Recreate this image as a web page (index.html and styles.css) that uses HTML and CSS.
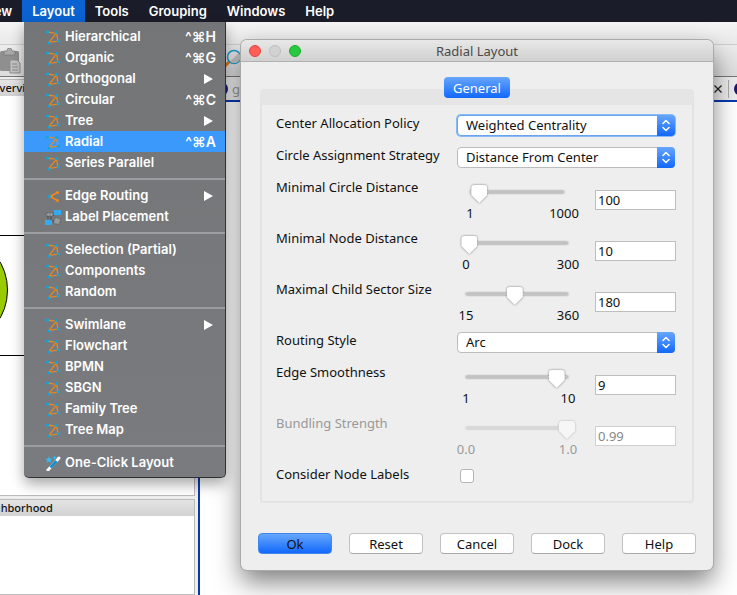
FILE: index.html
```
<!DOCTYPE html>
<html lang="en">
<head>
<meta charset="utf-8">
<title>Radial Layout</title>
<link rel="stylesheet" href="styles.css">
</head>
<body>
<svg class="symbols" aria-hidden="true">
  <symbol id="graph" viewBox="0 0 16 16">
    <path d="M3 3.500L11.500 4L4 13.500L13 12L11.500 4M8 3.800L3.500 3.200" fill="none" stroke="#ee8a1d" stroke-width="1.200"/>
    <g fill="#12a4dc"><circle cx="2.500" cy="3" r="1.600"/><circle cx="11.500" cy="3.500" r="1.600"/><circle cx="4" cy="14" r="1.600"/><circle cx="13.500" cy="12" r="1.600"/></g>
  </symbol>
  <symbol id="updown" viewBox="0 0 18 21">
    <path d="M6 8.500L9 5.500L12 8.500M6 12.500L9 15.500L12 12.500" fill="none" stroke="#fff" stroke-width="1.500" stroke-linecap="round" stroke-linejoin="round"/>
  </symbol>
  <symbol id="submenu" viewBox="0 0 9 10"><path d="M0 0L9 5L0 10Z" fill="#fff"/></symbol>
</svg>

<nav class="menubar">
  <button class="view">View</button>
  <button class="open">Layout</button>
  <button>Tools</button>
  <button>Grouping</button>
  <button>Windows</button>
  <button>Help</button>
</nav>

<main class="app">
  <div class="app-title"></div>
  <div class="toolbar">
    <svg class="paste" viewBox="0 0 22 26" aria-hidden="true">
      <rect x="0" y="3" width="19" height="20" rx="1.500" fill="#8f8f8f"/>
      <path d="M4 7V3H7Q7 0 9.500 0T12 3H15V7Z" fill="#a9a9a9" stroke="#777" stroke-width=".7"/>
      <path d="M10 12H17L20 15V25H10Z" fill="#c4c4c4" stroke="#8b8b8b"/>
      <path d="M12 16H17M12 19H18M12 22H18" stroke="#858585"/>
    </svg>
    <svg class="search" viewBox="0 0 20 20" aria-hidden="true">
      <path d="M6 13L1 18" stroke="#e57a14" stroke-width="3"/>
      <circle cx="10" cy="9" r="6.500" fill="#e8e8e8" stroke="#1b9fd3" stroke-width="1.500"/>
      <path d="M14.500 5A6 6 0 0 1 6 13.500Z" fill="#c4c4c4"/>
    </svg>
  </div>
  <div class="workspace">
    <aside class="side">
      <section class="panel overview">
        <h2>Overview</h2>
        <svg class="preview" viewBox="0 0 194 400" preserveAspectRatio="xMinYMin slice" aria-hidden="true">
          <path d="M0 139.500H194M0 259.500H194" stroke="#000"/>
          <ellipse cx="-32" cy="194" rx="39.500" ry="48" fill="#99cc00" stroke="#000"/>
        </svg>
      </section>
      <section class="panel neighborhood">
        <h2>Neighborhood</h2>
      </section>
    </aside>
    <section class="documents">
      <div class="tabs">
        <span class="dot"></span><span class="tab-name">gl</span>
        <svg class="close" viewBox="0 0 8 8" aria-hidden="true"><path d="M0.500 .5L7.500 7.500M7.500 .5L.5 7.500" stroke="#222" stroke-width="1.300"/></svg>
        <span class="divider"></span><span class="dot"></span>
      </div>
      <div class="canvas"></div>
    </section>
  </div>
</main>

<section class="dialog" role="dialog" aria-labelledby="dialog-title">
  <header class="titlebar">
    <span class="light red"></span><span class="light idle"></span><span class="light green"></span>
    <h1 id="dialog-title">Radial Layout</h1>
  </header>
  <form class="settings">
    <button type="button" class="tab">General</button>
    <div class="frame">
      <div class="row">
        <label for="policy">Center Allocation Policy</label>
        <div class="choice focused"><select id="policy"><option>Weighted Centrality</option></select><svg><use href="#updown"/></svg></div>
      </div>
      <div class="row">
        <label for="strategy">Circle Assignment Strategy</label>
        <div class="choice"><select id="strategy"><option>Distance From Center</option></select><svg><use href="#updown"/></svg></div>
      </div>
      <div class="row tall">
        <label for="circle">Minimal Circle Distance</label>
        <div class="amount">
          <div class="slider inset"><input type="range" id="circle" min="1" max="1000" value="100"><div class="ends"><span>1</span><span>1000</span></div></div>
          <input type="text" value="100" aria-label="Minimal Circle Distance value">
        </div>
      </div>
      <div class="row tall">
        <label for="node">Minimal Node Distance</label>
        <div class="amount">
          <div class="slider"><input type="range" id="node" min="0" max="300" value="10"><div class="ends"><span>0</span><span>300</span></div></div>
          <input type="text" value="10" aria-label="Minimal Node Distance value">
        </div>
      </div>
      <div class="row tall">
        <label for="sector">Maximal Child Sector Size</label>
        <div class="amount">
          <div class="slider"><input type="range" id="sector" min="15" max="360" value="180"><div class="ends"><span>15</span><span>360</span></div></div>
          <input type="text" value="180" aria-label="Maximal Child Sector Size value">
        </div>
      </div>
      <div class="row">
        <label for="routing">Routing Style</label>
        <div class="choice"><select id="routing"><option>Arc</option></select><svg><use href="#updown"/></svg></div>
      </div>
      <div class="row tall">
        <label for="smooth">Edge Smoothness</label>
        <div class="amount">
          <div class="slider"><input type="range" id="smooth" min="1" max="10" value="9"><div class="ends"><span>1</span><span>10</span></div></div>
          <input type="text" value="9" aria-label="Edge Smoothness value">
        </div>
      </div>
      <div class="row tall disabled">
        <label for="bundling">Bundling Strength</label>
        <div class="amount">
          <div class="slider"><input type="range" id="bundling" min="0" max="1" step="0.01" value="0.99" disabled><div class="ends"><span>0.0</span><span>1.0</span></div></div>
          <input type="text" value="0.99" disabled aria-label="Bundling Strength value">
        </div>
      </div>
      <div class="row">
        <label for="consider">Consider Node Labels</label>
        <div class="check"><input type="checkbox" id="consider"></div>
      </div>
    </div>
    <footer class="actions">
      <button type="button" class="primary">Ok</button>
      <button type="button">Reset</button>
      <button type="button">Cancel</button>
      <button type="button">Dock</button>
      <button type="button">Help</button>
    </footer>
  </form>
</section>

<div class="menu" role="menu">
  <button role="menuitem"><svg><use href="#graph"/></svg><span>Hierarchical</span><kbd>^⌘H</kbd></button>
  <button role="menuitem"><svg><use href="#graph"/></svg><span>Organic</span><kbd>^⌘G</kbd></button>
  <button role="menuitem"><svg><use href="#graph"/></svg><span>Orthogonal</span><svg class="more"><use href="#submenu"/></svg></button>
  <button role="menuitem"><svg><use href="#graph"/></svg><span>Circular</span><kbd>^⌘C</kbd></button>
  <button role="menuitem"><svg><use href="#graph"/></svg><span>Tree</span><svg class="more"><use href="#submenu"/></svg></button>
  <button role="menuitem" class="current"><svg><use href="#graph"/></svg><span>Radial</span><kbd>^⌘A</kbd></button>
  <button role="menuitem"><svg><use href="#graph"/></svg><span>Series Parallel</span></button>
  <hr>
  <button role="menuitem"><svg viewBox="0 0 16 16"><path d="M12.500 4.500L5 8.500L12.500 12.500M5 8.500H8" fill="none" stroke="#ee8a1d" stroke-width="1.500"/><g fill="#ee8a1d"><circle cx="12.500" cy="4.500" r="1.500"/><circle cx="12.500" cy="12.500" r="1.500"/></g><circle cx="4" cy="8.500" r="1.700" fill="#12a4dc"/></svg><span>Edge Routing</span><svg class="more"><use href="#submenu"/></svg></button>
  <button role="menuitem"><svg viewBox="0 0 16 16"><path d="M3 10V6H9M6 6V12H9" fill="none" stroke="#444950"/><path d="M1 4H8V7H1ZM9 9H15V15H9Z" fill="#979ba1" stroke="#5f6468" stroke-dasharray="2 1"/><path d="M9 1H16V6H9ZM0 11H7V16H0Z" fill="#32aaf4"/></svg><span>Label Placement</span></button>
  <hr>
  <button role="menuitem"><svg><use href="#graph"/></svg><span>Selection (Partial)</span></button>
  <button role="menuitem"><svg><use href="#graph"/></svg><span>Components</span></button>
  <button role="menuitem"><svg><use href="#graph"/></svg><span>Random</span></button>
  <hr>
  <button role="menuitem"><svg><use href="#graph"/></svg><span>Swimlane</span><svg class="more"><use href="#submenu"/></svg></button>
  <button role="menuitem"><svg><use href="#graph"/></svg><span>Flowchart</span></button>
  <button role="menuitem"><svg><use href="#graph"/></svg><span>BPMN</span></button>
  <button role="menuitem"><svg><use href="#graph"/></svg><span>SBGN</span></button>
  <button role="menuitem"><svg><use href="#graph"/></svg><span>Family Tree</span></button>
  <button role="menuitem"><svg><use href="#graph"/></svg><span>Tree Map</span></button>
  <hr>
  <button role="menuitem"><svg viewBox="0 0 16 16"><path d="M3 15L14 3" stroke="#fff" stroke-width="3" stroke-linecap="round"/><path d="M5.500 12.500L11.500 6" stroke="#168fce" stroke-width="3"/><path d="M4 1L5 3.500L8 3.700L5.700 5.300L6.500 8L4 6.500L1.500 8L2.300 5.300L0 3.700L3 3.500Z" fill="#35b9f2"/><path d="M9.500 .5L10.200 2L12 2.500L10.200 3.200L9.500 5L8.800 3.200L7.500 2.500L8.800 2Z" fill="#35b9f2"/></svg><span>One-Click Layout</span></button>
</div>
</body>
</html>
```

FILE: styles.css
```
* { box-sizing: border-box; }

body {
  margin: 0;
  min-height: 100vh;
  display: flex;
  flex-direction: column;
  overflow: hidden;
  font: 13px/20px "Noto Sans", "Open Sans", sans-serif;
  color: #111;
  background: #eee;
}

button, input, select { font: inherit; color: inherit; margin: 0; }
h1, h2 { margin: 0; font-size: inherit; font-weight: 400; }
.symbols { position: absolute; width: 0; height: 0; }

/* Menu bar */
.menubar {
  display: flex;
  height: 22px;
  background: #1a1d29;
}
.menubar button {
  flex: none;
  padding: 0 10px;
  border: 0;
  background: none;
  color: #fff;
  font: 600 13px/22px Inter, sans-serif;
}
.menubar .view { margin-left: -29px; }
.menubar .open { background: #0a63d1; }

/* Application window behind the dialog */
.app { flex: 1; display: flex; flex-direction: column; }
.app-title { height: 23px; background: linear-gradient(#f5f5f5, #eaeaea); border-bottom: 1px solid #cfcfcf; }
.toolbar {
  display: flex;
  align-items: center;
  gap: 202px;
  height: 32px;
  background: linear-gradient(#ececec, #dcdcdc);
  border-bottom: 1px solid #777;
}
.paste { width: 22px; height: 26px; }
.search { align-self: flex-start; width: 20px; height: 20px; margin-top: 3px; }
.workspace { flex: 1; display: flex; }
.side { width: 198px; display: flex; flex-direction: column; gap: 3px; padding: 2px 3px 0 0; }
.panel {
  display: flex;
  flex-direction: column;
  border: solid #bbb;
  border-width: 1px 1px 1px 0;
  background: #fff;
  overflow: hidden;
}
.panel h2 {
  flex: none;
  height: 16px;
  font-size: 11px;
  font-weight: 500;
  line-height: 16px;
  background: linear-gradient(#e4e4e4, #d2d2d2);
}
.overview { height: 417px; }
.overview h2 { text-indent: -9px; }
.neighborhood { flex: 1; }
.neighborhood h2 { text-indent: -24px; }
.preview { width: 100%; height: 400px; }
.documents { flex: 1; display: flex; flex-direction: column; }
.tabs {
  display: flex;
  align-items: center;
  height: 23px;
  padding-left: 20px;
  background: #ececec;
  overflow: hidden;
}
.dot { flex: none; width: 10px; height: 12px; border-radius: 50%; background: #191970; }
.tab-name { flex: 1; padding-left: 4px; color: #999; }
.close { width: 8px; height: 8px; margin-right: 6px; }
.divider { height: 18px; margin-right: 5px; border-left: 1px solid #aaa; }
.tabs .dot:last-child { margin-right: -7px; }
.canvas { flex: 1; border: solid #0839b0; border-width: 2px 0 0 2px; background: #fff; }

/* Layout menu */
.menu {
  position: absolute;
  top: 22px;
  left: 24px;
  width: 202px;
  padding: 4px 0;
  border: solid #303136;
  border-width: 0 1px 1px 0;
  border-radius: 0 0 5px 5px;
  background: linear-gradient(#737576, #797b7f);
  box-shadow: 0 6px 14px rgba(0, 0, 0, .35);
}
.menu button {
  display: flex;
  align-items: center;
  gap: 4px;
  width: 100%;
  height: 21px;
  padding: 0 9px 0 21px;
  border: 0;
  background: none;
  color: #fff;
  font: 600 13px/21px Inter, sans-serif;
  text-align: left;
}
.menu .current { background: #3b99fc; }
.menu svg { flex: none; width: 16px; height: 16px; }
.menu span { flex: 1; white-space: nowrap; }
.menu kbd { font: 600 14px/21px Inter, "DejaVu Sans", sans-serif; }
.menu .more { width: 9px; height: 10px; margin-right: 3px; }
.menu hr { height: 2px; margin: 5px 0; border: 0; background: #9b9da1; }

/* Dialog */
.dialog {
  position: absolute;
  top: 40px;
  left: 241px;
  right: 24px;
  border-radius: 6px;
  background: #eee;
  box-shadow: 0 0 0 1px #aaa, 0 12px 26px rgba(0, 0, 0, .5);
}
.titlebar {
  display: flex;
  align-items: center;
  gap: 8px;
  height: 22px;
  padding: 0 68px 0 8px;
  border-bottom: 1px solid #b0b0b0;
  border-radius: 6px 6px 0 0;
  background: linear-gradient(#e8e8e8, #d0d0d0);
}
.titlebar h1 { flex: 1; text-align: center; color: #4a4a4a; }
.light { width: 12px; height: 12px; border: 1px solid #bdbdbd; border-radius: 50%; background: #d2d2d2; }
.red { background: #ff5f57; border-color: #e2463f; }
.green { background: #28c940; border-color: #1dad2b; }

.settings { display: flex; flex-direction: column; padding: 15px 17px 16px; }
.tab {
  z-index: 1;
  align-self: center;
  height: 21px;
  margin-bottom: -9px;
  padding: 0 9px;
  border: 0;
  border-radius: 4px;
  background: linear-gradient(#66a6fb, #1268fb);
  color: #fff;
  line-height: 20px;
}
.frame {
  margin: 0 2px;
  padding: 8px 16px 1px 14px;
  border: 2px solid #e3e3e3;
  border-top: 16px solid #e5e5e5;
  border-radius: 4px;
}
.row { display: grid; grid-template-columns: 170px 1fr; height: 32px; }
.tall { height: 51px; }
.row:last-child { height: 36px; }
.row label { white-space: nowrap; }
.disabled { color: #999; }

.choice { position: relative; height: 21px; margin: 2px 1px 0 11px; }
.choice select {
  appearance: none;
  display: block;
  width: 100%;
  height: 21px;
  padding: 0 22px 0 8px;
  border: 1px solid #bcbcbc;
  border-radius: 4px;
  outline: 0;
  background: #fff;
  line-height: 19px;
}
.choice svg {
  position: absolute;
  top: 0;
  right: 0;
  width: 18px;
  height: 21px;
  border-radius: 0 4px 4px 0;
  background: linear-gradient(#66a6fb, #1268fb);
  pointer-events: none;
}
.focused select { border-color: #6aa5ec; box-shadow: 0 0 0 1px #86b9f5; }

.amount { display: flex; gap: 7px; }
.amount [type="text"] {
  width: 81px;
  height: 20px;
  margin-top: 13px;
  padding: 0 2px;
  border: 1px solid #bebebe;
  background: #fff;
  line-height: 18px;
}
.disabled [type="text"] { border-color: #d0d0d0; color: #888; }
.slider { flex: 1; min-width: 0; }
.inset { padding: 0 4px; }
.slider [type="range"] {
  appearance: none;
  display: block;
  width: calc(100% - 24px);
  height: 18px;
  margin: 8px 12px 0;
  background: none;
  filter: drop-shadow(0 0 1px rgba(0, 0, 0, .5));
}
.slider [type="range"]::-webkit-slider-runnable-track {
  height: 18px;
  background: linear-gradient(#c2c2c2, #c2c2c2) center 6px / calc(100% - 16px) 2px no-repeat;
}
.slider [type="range"]::-webkit-slider-thumb {
  appearance: none;
  width: 16px;
  height: 18px;
  background: #fff;
  clip-path: path("M3 0H13Q16 0 16 3V10L8 18L0 10V3Q0 0 3 0Z");
}
.disabled [type="range"] { opacity: .5; }
.ends { display: flex; justify-content: space-between; }
.ends span { width: 40px; text-align: center; }

.check { padding: 5px 0 0 14px; }
.check input {
  appearance: none;
  display: block;
  width: 14px;
  height: 14px;
  border: 1px solid #b4b4b4;
  border-radius: 3px;
  background: #fff;
}

.actions {
  display: grid;
  grid-template-columns: repeat(5, 1fr);
  gap: 17px;
  margin-top: 30px;
}
.actions button {
  height: 21px;
  padding: 0;
  border: 1px solid #c2c2c2;
  border-bottom-color: #a9a9a9;
  border-radius: 4px;
  background: #fff;
  line-height: 18px;
}
.actions .primary { border-color: #3f86ee; background: linear-gradient(#66a6fb, #1268fb); }
```
